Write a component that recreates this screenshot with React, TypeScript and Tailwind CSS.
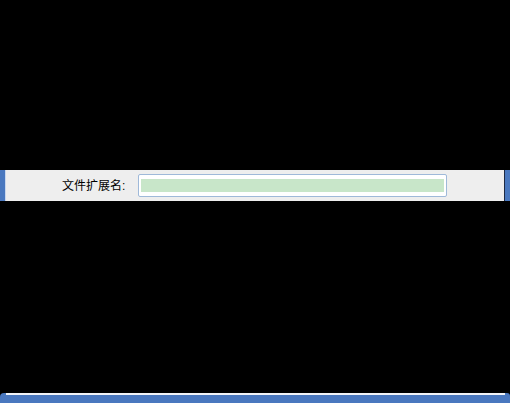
export default function App() {
  return (
    <div className="relative h-[403px] w-[510px] overflow-hidden bg-black" style={{ fontFamily: '"Liberation Sans", "Noto Sans CJK SC", sans-serif' }}>
      <div className="h-[170px]" />
      {/* field row */}
      <div className="flex h-[31px]">
        <div className="w-[5px] bg-[#4a78bf]" />
        <div className="w-px bg-[#c9d7ee]" />
        <div className="flex flex-1 items-center bg-[#eeeeee]">
          <span className="ml-[56px] w-[64px] whitespace-nowrap text-[12px] leading-none text-black">文件扩展名:</span>
          <div className="ml-[12px] flex h-[23px] w-[309px] items-center rounded-[2px] border border-[#9fb9d9] bg-white px-[2px]">
            <div className="h-[13px] w-full bg-[#c8e6c9]" />
          </div>
        </div>
        <div className="w-px bg-[#1e2a44]" />
        <div className="w-[5px] bg-[#4a78bf]" />
      </div>
      <div className="h-[192px]" />
      {/* bottom frame */}
      <div className="flex h-[10px]">
        <div className="w-[6px] rounded-tl-[4px] bg-[#4a78bf]" />
        <div className="flex flex-1 flex-col">
          <div className="h-[2px] bg-[#f2f4f8]" />
          <div className="flex-1 bg-[#4a78bf]" />
        </div>
        <div className="w-[5px] rounded-tr-[3px] bg-[#4a78bf]" />
      </div>
    </div>
  );
}
